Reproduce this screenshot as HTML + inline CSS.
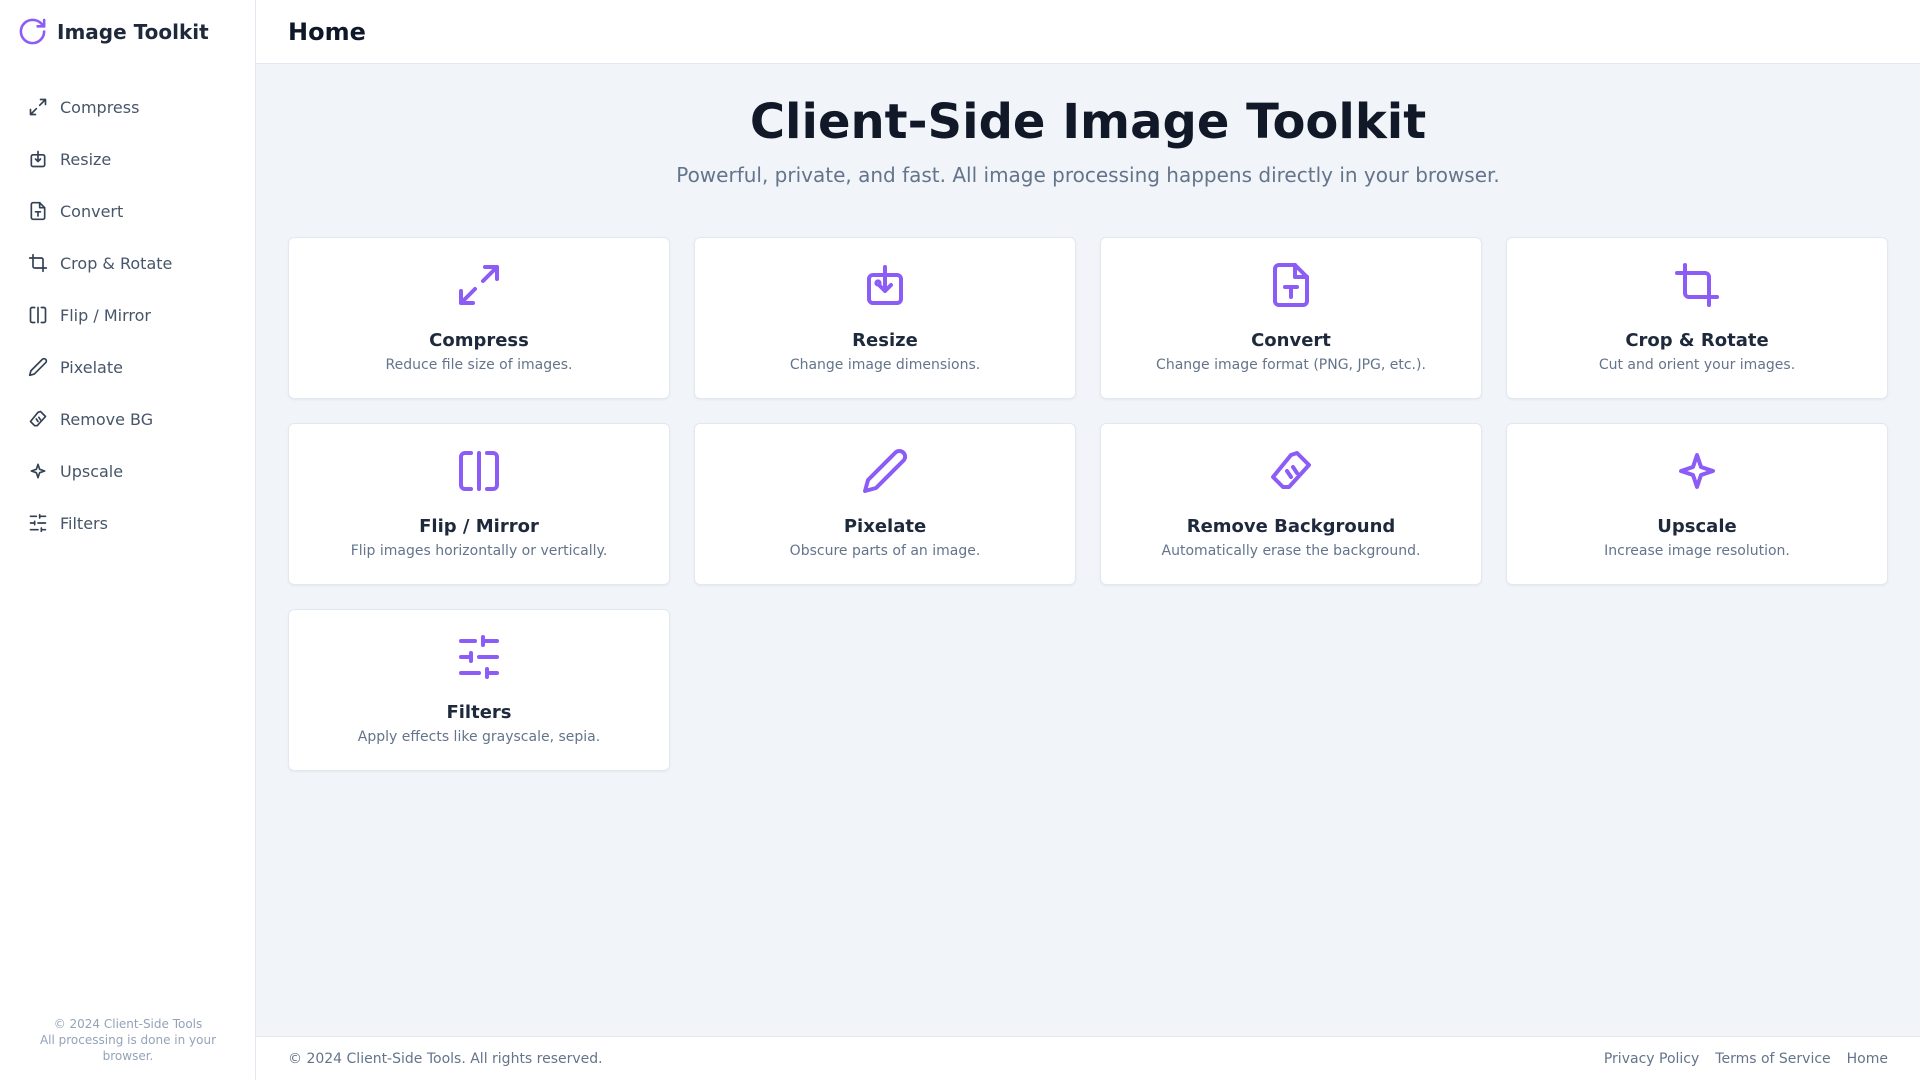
<!DOCTYPE html>
<html><head><meta charset="utf-8"><style>
*{box-sizing:border-box;margin:0;padding:0}
body{width:1920px;height:1080px;overflow:hidden;font-family:"DejaVu Sans","Liberation Sans",sans-serif;background:#f1f5f9;position:relative;color:#0f172a}
.side{position:absolute;left:0;top:0;width:256px;height:1080px;background:#fff;border-right:1px solid #e2e8f0}
.logo{position:absolute;left:17px;top:16px;display:flex;align-items:center}
.logo span{font-size:20px;font-weight:bold;color:#1e293b;margin-left:9px}
.nav{position:absolute;left:28px;top:81px}
.nav div{height:52px;display:flex;align-items:center;font-size:16px;color:#475569}
.nav svg{width:20px;height:20px;margin-right:12px;stroke:#334155}
.sfoot{position:absolute;left:0;width:256px;top:1016px;text-align:center;font-size:12px;line-height:16px;color:#94a3b8;padding:0 36px}
.head{position:absolute;left:256px;top:0;right:0;height:64px;background:#fff;border-bottom:1px solid #e2e8f0}
.head h2{position:absolute;left:32px;top:16px;font-size:24px;line-height:32px;font-weight:bold;color:#0f172a}
h1{position:absolute;left:256px;right:0;top:96px;text-align:center;font-size:48px;line-height:52px;font-weight:bold;color:#111827}
.sub{position:absolute;left:256px;right:0;top:161px;text-align:center;font-size:20px;line-height:28px;color:#64748b}
.card{position:absolute;width:382px;height:162px;background:#fff;border:1px solid #e2e8f0;border-radius:6px;box-shadow:0 1px 2px rgba(0,0,0,.05);text-align:center}
.card svg{position:absolute;left:166px;top:23px;width:48px;height:48px;stroke:#8b5cf6}
.card b{position:absolute;left:0;right:0;top:91px;font-size:18px;line-height:24px;color:#1e293b}
.card p{position:absolute;left:0;right:0;top:117px;font-size:14px;line-height:20px;color:#64748b}
svg{fill:none;stroke-width:2;stroke-linecap:round;stroke-linejoin:round}
.foot{position:absolute;left:256px;right:0;top:1036px;height:44px;background:#fff;border-top:1px solid #e2e8f0;font-size:14px;color:#64748b}
.foot .l{position:absolute;left:32px;top:14px}
.foot .r{position:absolute;right:32px;top:14px}
.foot .r span{margin-left:16px}
</style></head><body>
<div class="side">
<div class="logo"><svg width="31" height="31" viewBox="0 0 24 24" style="stroke:#8b5cf6"><path d="M21 12a9 9 0 1 1-9-9c2.520 0 4.93 1 6.74 2.740L21 8"/><path d="M21 3v5h-5"/></svg><span>Image Toolkit</span></div>
<div class="nav">
<div><svg viewBox="0 0 24 24"><path d="M15 3h6v6M9 21H3v-6M21 3l-7 7M3 21l7-7"/></svg>Compress</div>
<div><svg viewBox="0 0 24 24"><rect x="4" y="7" width="16" height="14" rx="2"/><path d="M12 3v12m-3-3 3 3 3-3"/></svg>Resize</div>
<div><svg viewBox="0 0 24 24"><path d="M14 2H6a2 2 0 0 0-2 2v16a2 2 0 0 0 2 2h12a2 2 0 0 0 2-2V8z"/><path d="M14 2v6h6"/><path d="M9 13h6M12 13v5"/></svg>Convert</div>
<div><svg viewBox="0 0 24 24"><path d="M6 2v14a2 2 0 0 0 2 2h14"/><path d="M18 22V8a2 2 0 0 0-2-2H2"/></svg>Crop &amp; Rotate</div>
<div><svg viewBox="0 0 24 24"><path d="M8 3H5a2 2 0 0 0-2 2v14a2 2 0 0 0 2 2h3M16 3h3a2 2 0 0 1 2 2v14a2 2 0 0 1-2 2h-3M12 3v18"/></svg>Flip / Mirror</div>
<div><svg viewBox="0 0 24 24"><path d="M17 3a2.85 2.83 0 1 1 4 4L7.5 20.5 2 22l1.5-5.5Z"/></svg>Pixelate</div>
<div><svg viewBox="0 0 24 24"><path d="M15 3l6 6-10 11H8l-5-5 9-11z"/><path d="M10 12l2 3M13 10l2 3"/></svg>Remove BG</div>
<div><svg viewBox="0 0 24 24"><path d="M12 4l2 6 6 2-6 2-2 6-2-6-6-2 6-2z"/></svg>Upscale</div>
<div><svg viewBox="0 0 24 24"><path d="M21 4h-7M10 4H3M21 12h-9M8 12H3M21 20h-5M12 20H3M14 2v4M8 10v4M16 18v4"/></svg>Filters</div>
</div>
<div class="sfoot">© 2024 Client-Side Tools<br>All processing is done in your browser.</div>
</div>
<div class="head"><h2>Home</h2></div>
<h1>Client-Side Image Toolkit</h1>
<div class="sub">Powerful, private, and fast. All image processing happens directly in your browser.</div>

<div class="card" style="left:288px;top:237px"><svg viewBox="0 0 24 24"><path d="M15 3h6v6M9 21H3v-6M21 3l-7 7M3 21l7-7"/></svg><b>Compress</b><p>Reduce file size of images.</p></div>
<div class="card" style="left:694px;top:237px"><svg viewBox="0 0 24 24"><rect x="4" y="7" width="16" height="14" rx="2"/><path d="M12 3v12m-3-3 3 3 3-3"/><circle cx="8.5" cy="11" r=".8"/></svg><b>Resize</b><p>Change image dimensions.</p></div>
<div class="card" style="left:1100px;top:237px"><svg viewBox="0 0 24 24"><path d="M14 2H6a2 2 0 0 0-2 2v16a2 2 0 0 0 2 2h12a2 2 0 0 0 2-2V8z"/><path d="M14 2v6h6"/><path d="M9 13h6M12 13v5"/></svg><b>Convert</b><p>Change image format (PNG, JPG, etc.).</p></div>
<div class="card" style="left:1506px;top:237px"><svg viewBox="0 0 24 24"><path d="M6 2v14a2 2 0 0 0 2 2h14"/><path d="M18 22V8a2 2 0 0 0-2-2H2"/></svg><b>Crop &amp; Rotate</b><p>Cut and orient your images.</p></div>

<div class="card" style="left:288px;top:423px"><svg viewBox="0 0 24 24"><path d="M8 3H5a2 2 0 0 0-2 2v14a2 2 0 0 0 2 2h3M16 3h3a2 2 0 0 1 2 2v14a2 2 0 0 1-2 2h-3M12 3v18"/></svg><b>Flip / Mirror</b><p>Flip images horizontally or vertically.</p></div>
<div class="card" style="left:694px;top:423px"><svg viewBox="0 0 24 24"><path d="M17 3a2.85 2.83 0 1 1 4 4L7.5 20.5 2 22l1.5-5.5Z"/></svg><b>Pixelate</b><p>Obscure parts of an image.</p></div>
<div class="card" style="left:1100px;top:423px"><svg viewBox="0 0 24 24"><path d="M15 3l6 6-10 11H8l-5-5 9-11z"/><path d="M10 12l2 3M13 10l2 3"/></svg><b>Remove Background</b><p>Automatically erase the background.</p></div>
<div class="card" style="left:1506px;top:423px"><svg viewBox="0 0 24 24"><path d="M12 4l2 6 6 2-6 2-2 6-2-6-6-2 6-2z"/></svg><b>Upscale</b><p>Increase image resolution.</p></div>

<div class="card" style="left:288px;top:609px"><svg viewBox="0 0 24 24"><path d="M21 4h-7M10 4H3M21 12h-9M8 12H3M21 20h-5M12 20H3M14 2v4M8 10v4M16 18v4"/></svg><b>Filters</b><p>Apply effects like grayscale, sepia.</p></div>

<div class="foot"><div class="l">© 2024 Client-Side Tools. All rights reserved.</div><div class="r">Privacy Policy<span>Terms of Service</span><span>Home</span></div></div>
</body></html>
